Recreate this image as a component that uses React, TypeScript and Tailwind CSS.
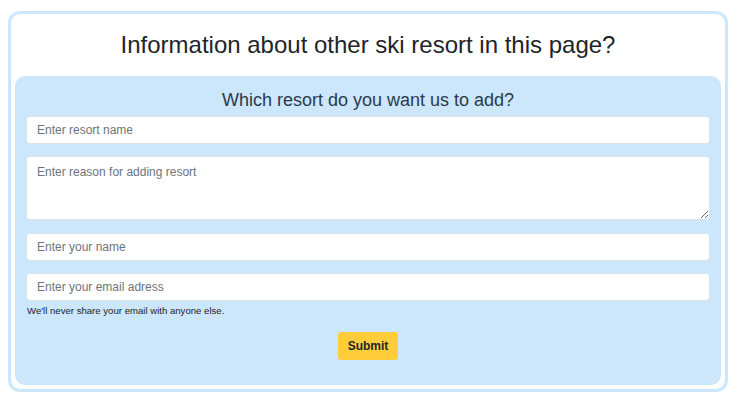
import React from "react";

export default function App() {
  const inputCls =
    "block w-full h-[28px] rounded-[4px] border border-[#dde5ec] bg-white px-[10px] text-[12px] text-[#212529] placeholder:text-[#6c757d] outline-none";
  return (
    <div
      className="w-[741px] h-[400px] bg-white pt-[11px] pl-[8px]"
      style={{ fontFamily: '"Liberation Sans", Arial, sans-serif' }}
    >
      <div className="w-[720px] h-[381px] rounded-[12px] border-[3px] border-[#cce6fb] px-[4px] pb-[4px] flex flex-col">
        <h1 className="mt-[17px] mb-[17px] text-center text-[24px] leading-[28px] text-[#212529]">
          Information about other ski resort in this page?
        </h1>
        <div className="flex-1 rounded-[10px] bg-[#cce6fb] px-[11px] pt-[13px]">
          <h2 className="text-center text-[18px] leading-[22px] text-[#2a3a4c] mb-[5px]">
            Which resort do you want us to add?
          </h2>
          <input className={inputCls} placeholder="Enter resort name" />
          <textarea
            className="mt-[12px] block w-full h-[64px] rounded-[4px] border border-[#dde5ec] bg-white px-[10px] py-[7px] text-[12px] leading-[16px] text-[#212529] placeholder:text-[#6c757d] outline-none"
            placeholder="Enter reason for adding resort"
          />
          <input className={"mt-[13px] " + inputCls} placeholder="Enter your name" />
          <input className={"mt-[12px] " + inputCls} placeholder="Enter your email adress" />
          <p className="mt-[4px] pl-[1px] text-[9.6px] leading-[12px] text-[#212529]">
            We'll never share your email with anyone else.
          </p>
          <div className="mt-[15px] flex justify-center">
            <button className="h-[28px] w-[60px] rounded-[3px] bg-[#ffcd39] text-[12px] font-bold text-[#212529]">
              Submit
            </button>
          </div>
        </div>
      </div>
    </div>
  );
}
